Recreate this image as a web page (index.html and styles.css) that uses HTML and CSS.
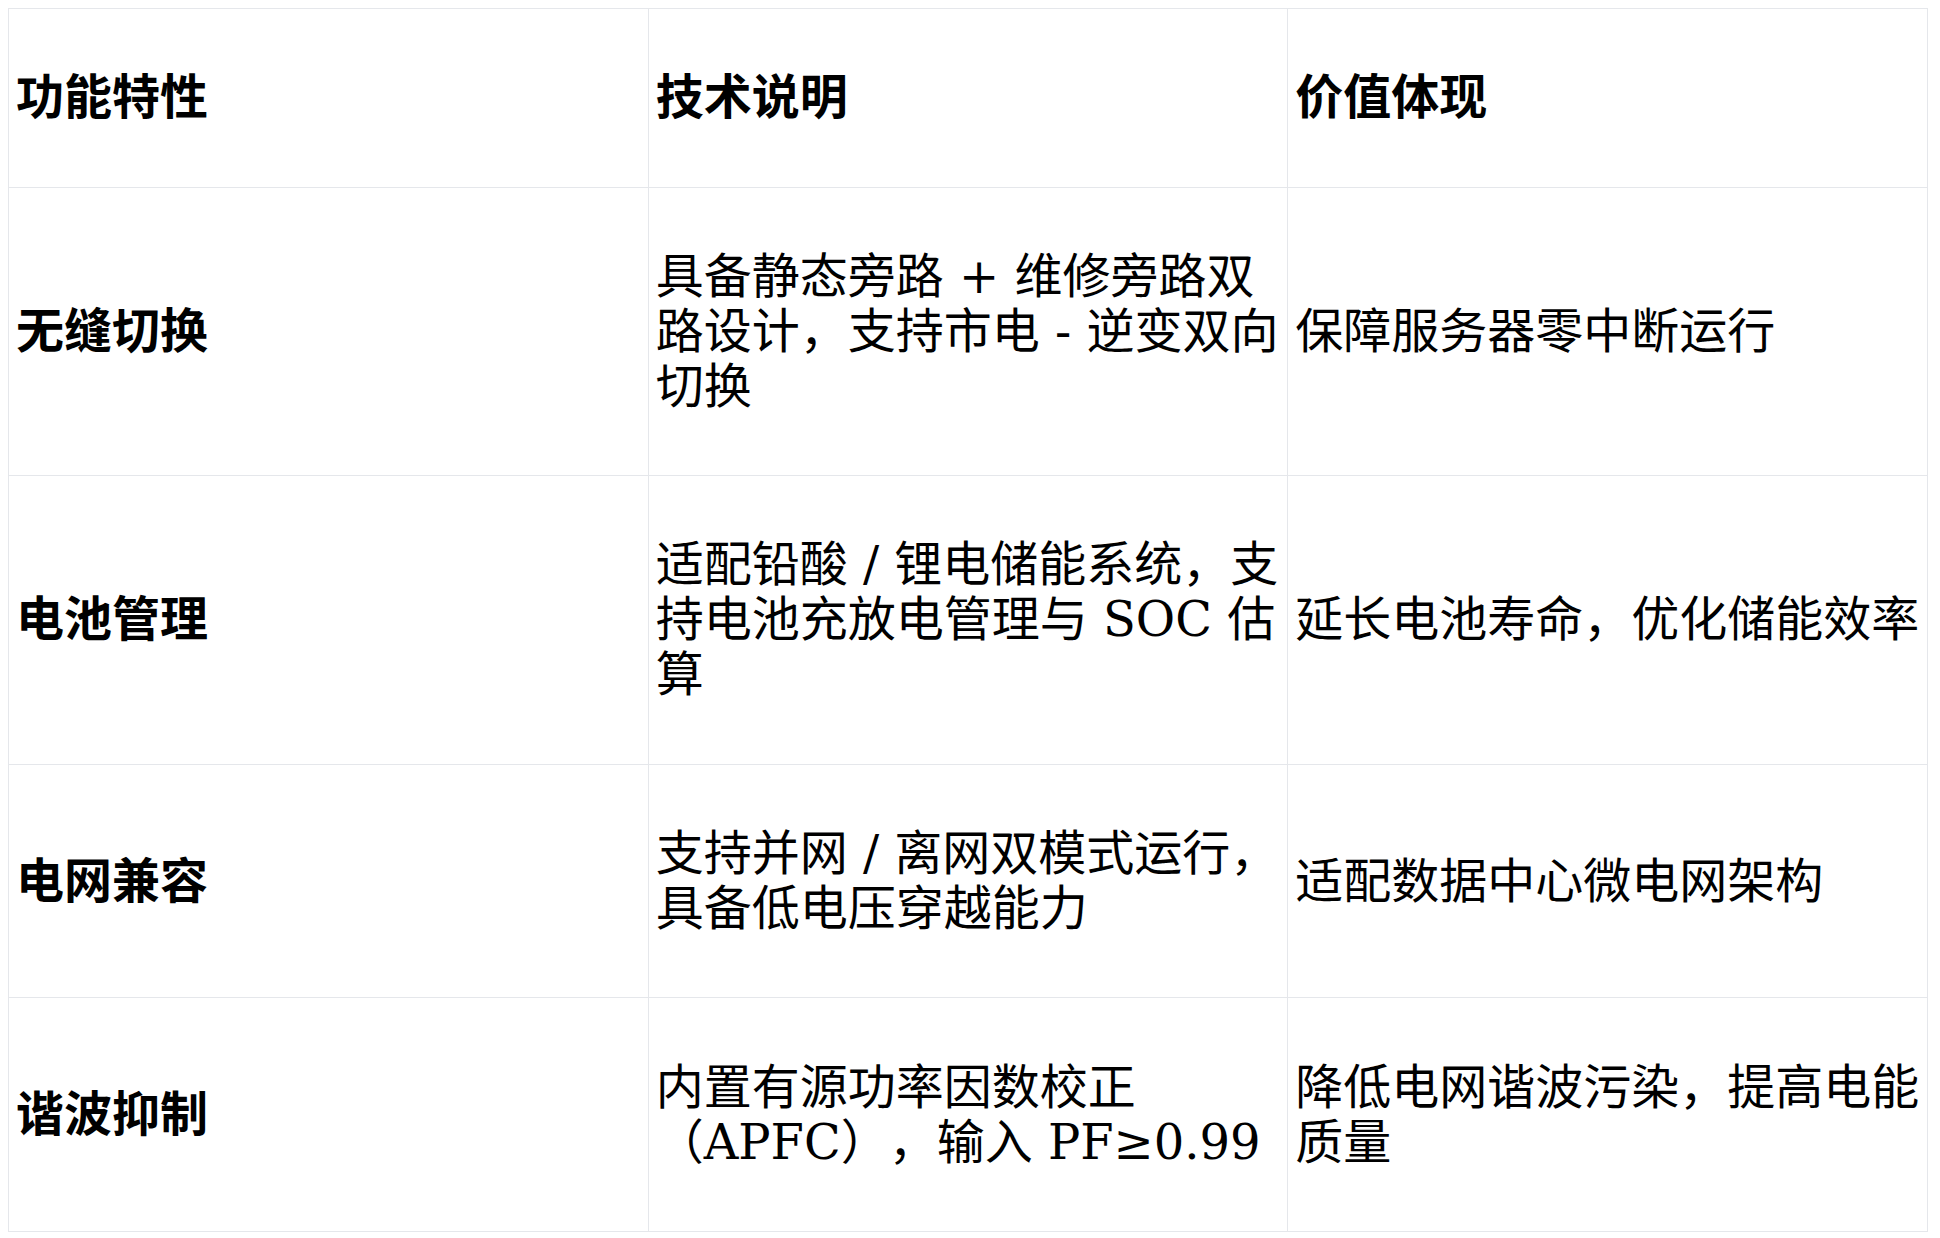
FILE: index.html
```html
<!DOCTYPE html>
<html lang="zh-CN">
<head>
<meta charset="utf-8">
<title>功能特性</title>
<link rel="stylesheet" href="styles.css">
</head>
<body>
<table class="spec">
  <colgroup>
    <col class="c1"><col class="c2"><col class="c3">
  </colgroup>
  <thead>
    <tr>
      <th>功能特性</th>
      <th>技术说明</th>
      <th>价值体现</th>
    </tr>
  </thead>
  <tbody>
    <tr>
      <td class="feat">无缝切换</td>
      <td>具备静态旁路 + 维修旁路双路设计，支持市电 - 逆变双向切换</td>
      <td>保障服务器零中断运行</td>
    </tr>
    <tr>
      <td class="feat">电池管理</td>
      <td>适配铅酸 / 锂电储能系统，支持电池充放电管理与 SOC 估算</td>
      <td>延长电池寿命，优化储能效率</td>
    </tr>
    <tr>
      <td class="feat">电网兼容</td>
      <td>支持并网 / 离网双模式运行，具备低电压穿越能力</td>
      <td>适配数据中心微电网架构</td>
    </tr>
    <tr>
      <td class="feat">谐波抑制</td>
      <td>内置有源功率因数校正（APFC），输入 PF≥0.99</td>
      <td>降低电网谐波污染，提高电能质量</td>
    </tr>
  </tbody>
</table>
</body>
</html>
```

FILE: styles.css
```css
html, body {
  background: #ffffff;
}
body {
  margin: 8px;
  font-family: "DejaVu Serif", "Noto Sans CJK SC", serif;
  font-size: 48px;
  line-height: 55px;
  color: #000000;
  text-spacing-trim: space-all;
}
.spec {
  width: 1920px;
  border-collapse: collapse;
  table-layout: fixed;
}
.spec col {
  width: 33.3333%;
}
.spec th,
.spec td {
  border: 1px solid #e5e7eb;
  padding: 61.3px 5px 61.3px 7px;
  text-align: left;
  vertical-align: middle;
}
.spec th {
  font-weight: 700;
}
.spec .feat {
  font-weight: 700;
}
```
